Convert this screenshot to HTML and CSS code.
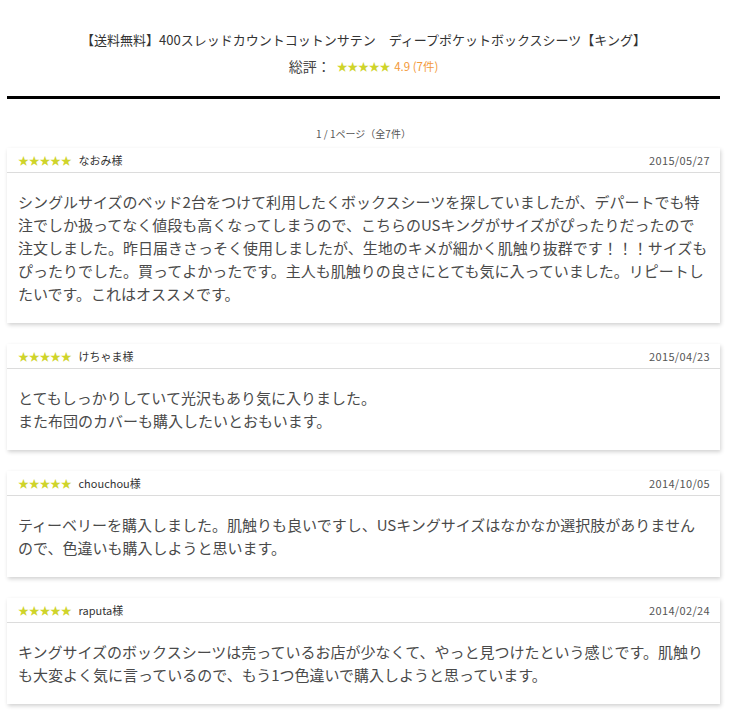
FILE: index.html
```html
<!DOCTYPE html>
<html lang="ja">
<head>
<meta charset="utf-8">
<title>レビュー</title>
<link rel="stylesheet" href="styles.css">
</head>
<body>
<div class="page">
  <header class="head">
    <h1 class="title">【送料無料】400スレッドカウントコットンサテン　ディープポケットボックスシーツ【キング】</h1>
    <div class="total">
      <span class="total-label">総評：</span>
      <span class="stars">★★★★★</span>
      <span class="score">4.9 (7件)</span>
    </div>
  </header>
  <div class="pager">1 / 1ページ（全7件）</div>

  <div class="review">
    <div class="review-head">
      <div class="who"><span class="stars">★★★★★</span><span class="name">なおみ様</span></div>
      <span class="date">2015/05/27</span>
    </div>
    <p class="review-body">シングルサイズのベッド2台をつけて利用したくボックスシーツを探していましたが、デパートでも特<br>注でしか扱ってなく値段も高くなってしまうので、こちらのUSキングがサイズがぴったりだったので<br>注文しました。昨日届きさっそく使用しましたが、生地のキメが細かく肌触り抜群です！！！サイズも<br>ぴったりでした。買ってよかったです。主人も肌触りの良さにとても気に入っていました。リピートし<br>たいです。これはオススメです。</p>
  </div>

  <div class="review">
    <div class="review-head">
      <div class="who"><span class="stars">★★★★★</span><span class="name">けちゃま様</span></div>
      <span class="date">2015/04/23</span>
    </div>
    <p class="review-body">とてもしっかりしていて光沢もあり気に入りました。<br>また布団のカバーも購入したいとおもいます。</p>
  </div>

  <div class="review">
    <div class="review-head">
      <div class="who"><span class="stars">★★★★★</span><span class="name">chouchou様</span></div>
      <span class="date">2014/10/05</span>
    </div>
    <p class="review-body">ティーベリーを購入しました。肌触りも良いですし、USキングサイズはなかなか選択肢がありません<br>ので、色違いも購入しようと思います。</p>
  </div>

  <div class="review">
    <div class="review-head">
      <div class="who"><span class="stars">★★★★★</span><span class="name">raputa様</span></div>
      <span class="date">2014/02/24</span>
    </div>
    <p class="review-body">キングサイズのボックスシーツは売っているお店が少なくて、やっと見つけたという感じです。肌触り<br>も大変よく気に言っているので、もう1つ色違いで購入しようと思っています。</p>
  </div>
</div>
</body>
</html>
```

FILE: styles.css
```css
* { box-sizing: border-box; }
html, body { margin: 0; padding: 0; background: #fff; }
body {
  font-family: "Noto Sans CJK JP", "Noto Sans", sans-serif;
  color: #444;
}
.page {
  padding: 0 11px 0 7px;
}
.head {
  padding-top: 30px;
  height: 99px;
  border-bottom: 3px solid #000;
  text-align: center;
}
.title {
  margin: 0;
  font-size: 13px;
  font-weight: normal;
  line-height: 20px;
  color: #333;
}
.total {
  margin-top: 6px;
  line-height: 20px;
  display: flex;
  justify-content: center;
  align-items: center;
}
.total-label {
  font-size: 14px;
  color: #444;
  margin-right: 6px;
}
.total .stars { font-size: 11px; }
.score {
  margin-left: 4px;
  font-size: 11.5px;
  color: #f39a3a;
}
.stars {
  color: #cfd42a;
  font-size: 11px;
  letter-spacing: -0.3px;
}
.pager {
  text-align: center;
  font-size: 10px;
  color: #555;
  line-height: 14px;
  margin-top: 28px;
  margin-bottom: 7px;
}
.review {
  background: #fff;
  box-shadow: 1px 2px 4px rgba(0, 0, 0, 0.18);
  margin-bottom: 21px;
}
.review-head {
  height: 25px;
  border-bottom: 1px solid #dcdcdc;
  padding: 0 10px 0 11px;
  display: flex;
  align-items: center;
  justify-content: space-between;
}
.who { display: flex; align-items: center; }
.name {
  margin-left: 7px;
  font-size: 11px;
  color: #333;
}
.date {
  font-size: 11px;
  color: #555;
  letter-spacing: 0.35px;
}
.review-body {
  margin: 0;
  padding: 17px 6px 18px 11px;
  font-size: 15px;
  line-height: 23px;
  color: #4a4a4a;
}
```
